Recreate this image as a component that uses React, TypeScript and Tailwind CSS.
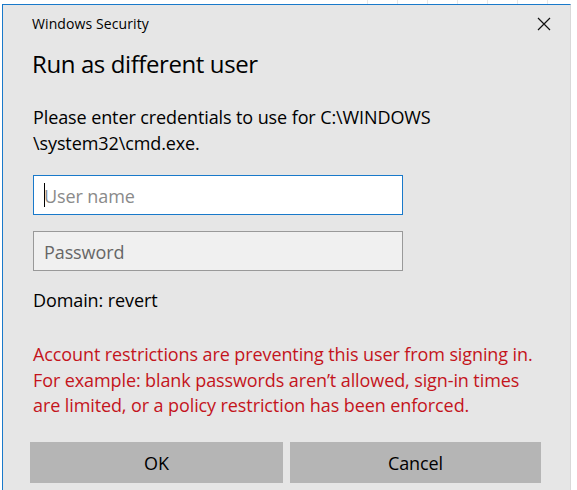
import React from "react";

export default function App() {
  const font = { fontFamily: '"Open Sans", "Noto Sans", sans-serif' };
  return (
    <div className="w-[577px] h-[490px] bg-white overflow-hidden relative" style={font}>
      <div className="absolute left-[367px] top-0 w-px h-[4px] bg-[#e8e8e8]" />
      <div className="absolute left-[397px] top-0 w-px h-[4px] bg-[#e8e8e8]" />
      <div className="absolute left-[427px] top-0 w-px h-[4px] bg-[#e8e8e8]" />
      <div className="absolute left-[457px] top-0 w-px h-[4px] bg-[#e8e8e8]" />
      <div className="absolute left-[487px] top-0 w-px h-[4px] bg-[#e8e8e8]" />
      <div className="absolute left-[517px] top-0 w-px h-[4px] bg-[#e8e8e8]" />
      <div className="absolute left-[547px] top-0 w-px h-[4px] bg-[#e8e8e8]" />
      <div className="ml-[2px] mt-[4px] w-[569px] h-[486px] bg-[#e6e6e6] border-l border-t border-[#1979ca] border-r-[#d9d9d9] border-r flex flex-col pl-[29px] pr-[20px]">
        <div className="mt-[9px] h-[20px] flex items-center justify-between text-[14px] leading-[20px] text-black">
          <span className="tracking-[0.1px]">Windows Security</span>
          <svg width="14" height="14" viewBox="0 0 14 14" className="mr-[-1px]">
            <path d="M1 1 L13 13 M13 1 L1 13" stroke="#111" strokeWidth="1.2" />
          </svg>
        </div>
        <div className="mt-[14px] h-[32px] text-[24px] leading-[32px] text-black tracking-[-0.4px]">
          Run as different user
        </div>
        <div className="mt-[24px] ml-[1px] text-[18px] leading-[26px] text-black tracking-[-0.1px]">
          Please enter credentials to use for C:\WINDOWS
          <br />
          \system32\cmd.exe.
        </div>
        <div className="mt-[19px] ml-[1px] w-[370px] h-[40px] bg-white border border-[#1979ca] flex items-center pl-[10px] pt-[3px] relative">
          <div className="w-px h-[24px] bg-black absolute left-[10px] top-[7px]" />
          <span className="text-[18px] text-[#8a8a8a] tracking-[-0.1px]">User name</span>
        </div>
        <div className="mt-[16px] ml-[1px] w-[370px] h-[40px] bg-[#f0f0f0] border border-[#999999] flex items-center pl-[10px] pt-[3px]">
          <span className="text-[18px] text-[#666666] tracking-[-0.1px]">Password</span>
        </div>
        <div className="mt-[17px] ml-[1px] h-[24px] text-[18px] leading-[24px] text-black tracking-[-0.1px]">
          Domain: revert
        </div>
        <div className="mt-[30px] ml-[1px] text-[18px] leading-[25.5px] text-[#c4141c] tracking-[-0.1px]">
          Account restrictions are preventing this user from signing in.
          <br />
          For example: blank passwords aren’t allowed, sign-in times
          <br />
          are limited, or a policy restriction has been enforced.
        </div>
        <div className="mt-[23px] -ml-[2px] flex gap-[7px]">
          <div className="w-[253px] h-[41px] bg-[#b5b5b5] flex items-center justify-center text-[18px] text-black pt-[2px]">
            OK
          </div>
          <div className="w-[251px] h-[41px] bg-[#b5b5b5] flex items-center justify-center text-[18px] text-black pt-[2px] tracking-[-0.1px]">
            Cancel
          </div>
        </div>
      </div>
    </div>
  );
}
